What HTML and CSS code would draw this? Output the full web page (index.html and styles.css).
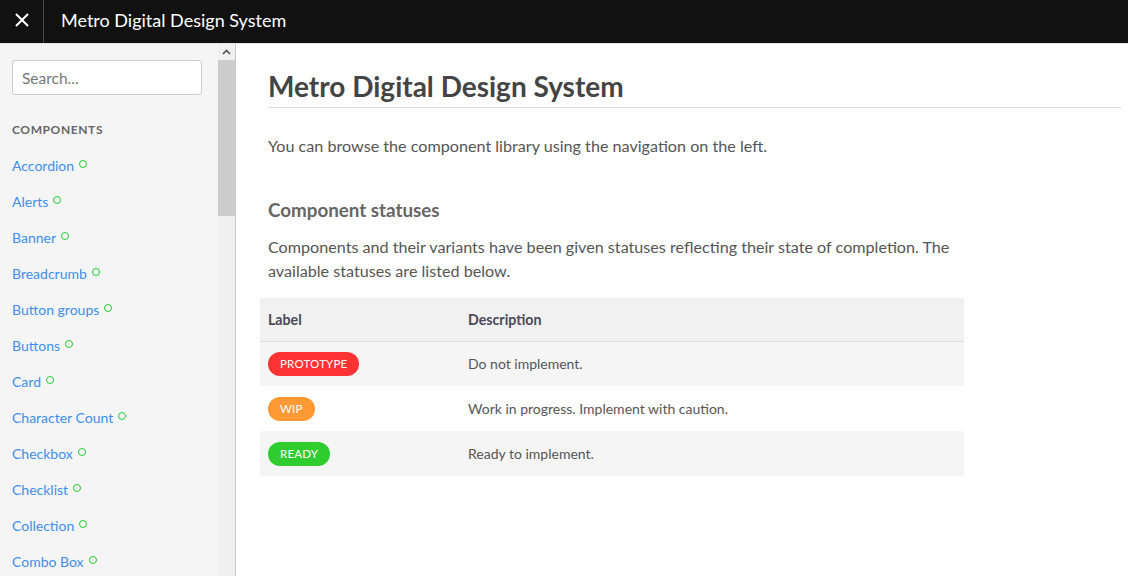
FILE: index.html
```html
<!DOCTYPE html>
<html lang="en">
<head>
<meta charset="utf-8">
<title>Metro Digital Design System</title>
<link rel="stylesheet" href="styles.css">
</head>
<body>
<header class="topbar">
  <button class="close-btn" aria-label="Close">
    <svg width="16" height="16" viewBox="0 0 16 16"><path d="M2 2 L14 14 M14 2 L2 14" stroke="#fff" stroke-width="2" fill="none"/></svg>
  </button>
  <span class="topbar-title">Metro Digital Design System</span>
</header>
<div class="layout">
  <aside class="sidebar">
    <nav class="sidebar-inner">
      <input class="search" type="text" placeholder="Search...">
      <div class="nav-heading">COMPONENTS</div>
      <ul class="nav-list">
        <li><a href="#">Accordion</a><span class="dot"></span></li>
        <li><a href="#">Alerts</a><span class="dot"></span></li>
        <li><a href="#">Banner</a><span class="dot"></span></li>
        <li><a href="#">Breadcrumb</a><span class="dot"></span></li>
        <li><a href="#">Button groups</a><span class="dot"></span></li>
        <li><a href="#">Buttons</a><span class="dot"></span></li>
        <li><a href="#">Card</a><span class="dot"></span></li>
        <li><a href="#">Character Count</a><span class="dot"></span></li>
        <li><a href="#">Checkbox</a><span class="dot"></span></li>
        <li><a href="#">Checklist</a><span class="dot"></span></li>
        <li><a href="#">Collection</a><span class="dot"></span></li>
        <li><a href="#">Combo Box</a><span class="dot"></span></li>
      </ul>
    </nav>
    <div class="scrollbar">
      <div class="scroll-up">
        <svg width="9" height="6" viewBox="0 0 9 6"><path d="M1 5 L4.5 1.5 L8 5" stroke="#505050" stroke-width="1.6" fill="none"/></svg>
      </div>
      <div class="scroll-thumb"></div>
      <div class="scroll-track"></div>
    </div>
  </aside>
  <main class="main">
    <h1 class="page-title">Metro Digital Design System</h1>
    <p class="lead">You can browse the component library using the navigation on the left.</p>
    <h3 class="section-title">Component statuses</h3>
    <p class="text">Components and their variants have been given statuses reflecting their state of completion. The available statuses are listed below.</p>
    <table class="status-table">
      <thead>
        <tr><th class="col-label">Label</th><th>Description</th></tr>
      </thead>
      <tbody>
        <tr><td><span class="badge badge-proto">PROTOTYPE</span></td><td>Do not implement.</td></tr>
        <tr><td><span class="badge badge-wip">WIP</span></td><td>Work in progress. Implement with caution.</td></tr>
        <tr><td><span class="badge badge-ready">READY</span></td><td>Ready to implement.</td></tr>
      </tbody>
    </table>
  </main>
</div>
</body>
</html>
```
FILE: styles.css
```css
* { box-sizing: border-box; }
html, body { margin: 0; padding: 0; }
body {
  width: 1128px;
  height: 576px;
  overflow: hidden;
  font-family: Lato, "Open Sans", sans-serif;
  background: #fff;
  color: #555;
}
.topbar {
  height: 44px;
  background: #111;
  border-bottom: 1px solid #e2e2e2;
  display: flex;
  align-items: center;
}
.close-btn {
  width: 44px;
  height: 43px;
  background: transparent;
  border: 0;
  border-right: 1px solid #4a4a4a;
  display: flex;
  align-items: center;
  justify-content: center;
  padding: 0;
  padding-bottom: 4px;
}
.topbar-title {
  margin-left: 17px;
  color: #fff;
  font-size: 18px;
  padding-bottom: 4px;
}
.layout {
  display: flex;
  height: 532px;
}
.sidebar {
  width: 236px;
  flex: none;
  display: flex;
  background: #f5f5f5;
  border-right: 1px solid #c8c8c8;
  overflow: hidden;
}
.sidebar-inner {
  width: 218px;
  flex: none;
  padding: 16px 12px 0 12px;
}
.search {
  display: block;
  width: 190px;
  height: 35px;
  border: 1px solid #ccc;
  border-radius: 3px;
  background: #fff;
  padding: 0 9px;
  font-family: inherit;
  font-size: 15.5px;
  color: #555;
}
.search::placeholder { color: #777; }
.nav-heading {
  margin-top: 17px;
  line-height: 36px;
  font-size: 12px;
  font-weight: 700;
  letter-spacing: 0.6px;
  color: #666;
}
.nav-list {
  list-style: none;
  margin: 0;
  padding: 0;
}
.nav-list li {
  line-height: 36px;
  font-size: 14px;
  display: flex;
  align-items: center;
}
.nav-list a {
  color: #3d8ff0;
  text-decoration: none;
}
.dot {
  width: 8px;
  height: 8px;
  border: 1.6px solid #22cc33;
  border-radius: 50%;
  margin-left: 5px;
  margin-top: -4px;
}
.scrollbar {
  width: 17px;
  flex: none;
  display: flex;
  flex-direction: column;
  background: #f0f0f0;
}
.scroll-up {
  height: 16px;
  display: flex;
  align-items: center;
  justify-content: center;
}
.scroll-thumb {
  height: 156px;
  background: #cdcdcd;
}
.scroll-track { flex: 1; }
.main {
  flex: 1;
  padding: 24px 7px 0 32px;
}
.page-title {
  margin: 0;
  font-size: 28px;
  line-height: 36px;
  font-weight: 700;
  color: #444;
  padding-bottom: 3px;
  border-bottom: 1px solid #d8d8d8;
}
.lead {
  margin: 26px 0 0 0;
  font-size: 16.15px;
  line-height: 24px;
  color: #555;
}
.section-title {
  margin: 40px 0 0 0;
  font-size: 18.8px;
  line-height: 24px;
  font-weight: 700;
  color: #666;
}
.text {
  margin: 13px 0 0 0;
  max-width: 700px;
  font-size: 16.15px;
  line-height: 24px;
  color: #555;
}
.status-table {
  margin: 15px 0 0 -8px;
  width: 704px;
  border-collapse: collapse;
  font-size: 14px;
}
.status-table th {
  text-align: left;
  height: 43px;
  padding: 0 8px;
  background: #f1f1f1;
  color: #4a4a58;
  font-weight: 700;
  font-size: 14.2px;
  border-bottom: 1px solid #dedede;
}
.status-table .col-label { width: 200px; }
.status-table td {
  height: 45px;
  padding: 0 8px;
  color: #555;
}
.status-table tbody tr:nth-child(odd) { background: #f5f5f5; }
.badge {
  display: inline-block;
  height: 24px;
  line-height: 24px;
  padding: 0 12px;
  border-radius: 12px;
  color: #fff;
  font-size: 11.5px;
  font-weight: 400;
  letter-spacing: 0.2px;
}
.badge-proto { background: #ff3333; }
.badge-wip { background: #ff9933; }
.badge-ready { background: #2ecc2e; }
```
